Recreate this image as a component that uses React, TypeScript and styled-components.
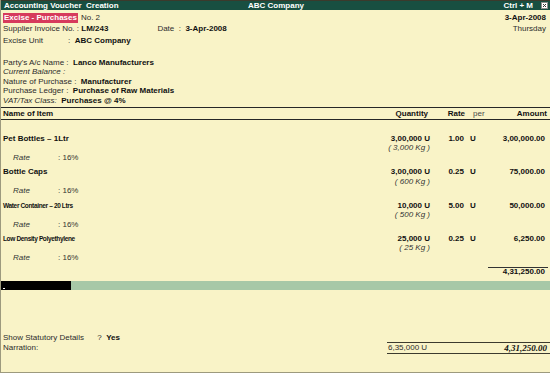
import React from 'react';
import styled, { createGlobalStyle } from 'styled-components';

interface ItemData {
  name: string;
  small?: boolean;
  qty: string;
  weight: string;
  rate: string;
  per: string;
  amount: string;
  tax: string;
}

const items: ItemData[] = [
  { name: 'Pet Bottles – 1Ltr', qty: '3,00,000 U', weight: '( 3,000 Kg )', rate: '1.00', per: 'U', amount: '3,00,000.00', tax: '16%' },
  { name: 'Bottle Caps', qty: '3,00,000 U', weight: '( 600 Kg )', rate: '0.25', per: 'U', amount: '75,000.00', tax: '16%' },
  { name: 'Water Container – 20 Ltrs', small: true, qty: '10,000 U', weight: '( 500 Kg )', rate: '5.00', per: 'U', amount: '50,000.00', tax: '16%' },
  { name: 'Low Density Polyethylene', small: true, qty: '25,000 U', weight: '( 25 Kg )', rate: '0.25', per: 'U', amount: '6,250.00', tax: '16%' },
];

const GlobalStyle = createGlobalStyle`
  html, body {
    margin: 0;
    padding: 0;
    background: #f9f3c7;
  }
  body {
    font-family: 'Liberation Sans', Arial, sans-serif;
    font-size: 8px;
    color: #1c1c1c;
  }
`;

const Screen = styled.div`
  width: 550px;
  height: 373px;
  box-sizing: border-box;
  background: #f9f3c7;
  border-left: 1px solid #9d9a7e;
  border-bottom: 1px solid #9d9a7e;
  display: flex;
  flex-direction: column;
  overflow: hidden;
`;

/* title bar */
const TitleBar = styled.div`
  height: 9px;
  border-top: 1px solid #3b3a2c;
  background: #184f41;
  color: #ffffff;
  font-weight: 700;
  line-height: 9px;
  display: grid;
  grid-template-columns: 1fr auto 1fr;
  align-items: center;
  padding: 0 2px 0 3px;
  white-space: pre;
`;

const TitleRight = styled.div`
  display: flex;
  justify-content: flex-end;
  align-items: center;
  gap: 8px;
`;

const CloseBox = () => (
  <svg width="7" height="7" viewBox="0 0 7 7">
    <rect x="0.5" y="0.5" width="6" height="6" fill="#ffffff" stroke="#8d8d8d" />
    <path d="M2 2 L5 5 M5 2 L2 5" stroke="#333" strokeWidth="1" />
  </svg>
);

/* voucher header */
const VoucherHead = styled.div`
  padding: 3px 4px 0 2px;
  display: flex;
  flex-direction: column;
`;

const HeadLine = styled.div<{ $gap?: number; $tall?: boolean }>`
  display: flex;
  align-items: center;
  justify-content: space-between;
  height: ${(p) => (p.$tall ? 10 : 9.5)}px;
  line-height: ${(p) => (p.$tall ? 10 : 9.5)}px;
  margin-top: ${(p) => p.$gap ?? 0}px;
  white-space: pre;
`;

const Group = styled.div`
  display: flex;
  align-items: center;
`;

const Badge = styled.span`
  background: #d63a5c;
  color: #ffffff;
  font-weight: 700;
  padding: 0 1px;
  height: 10px;
  line-height: 10px;
  margin-right: 3px;
`;

const Strong = styled.span`
  font-weight: 700;
  color: #111;
`;

const Muted = styled.span<{ $italic?: boolean }>`
  color: #2c2c2c;
  font-style: ${(p) => (p.$italic ? 'italic' : 'normal')};
`;

const FixedLabel = styled.span<{ $w: number }>`
  display: inline-block;
  width: ${(p) => p.$w}px;
  color: #2c2c2c;
`;

const DateField = styled.span`
  margin-left: 49px;
  color: #2c2c2c;
`;

/* table */
const ItemGrid = styled.div`
  display: grid;
  grid-template-columns: 1fr 80px 34px 24px 57px;
  padding: 0 5px 0 2px;
`;

const TableHead = styled(ItemGrid)`
  margin-top: 1.5px;
  height: 11px;
  line-height: 11px;
  border-top: 1px solid #262626;
  border-bottom: 1px solid #262626;
  font-weight: 700;
  color: #111;
`;

const HeadCell = styled.div<{ $align?: 'left' | 'right'; $shift?: number }>`
  text-align: ${(p) => p.$align ?? 'left'};
  margin-right: ${(p) => p.$shift ?? 0}px;
`;

const PerHead = styled.div`
  font-weight: 400;
  color: #4a4a4a;
  padding-left: 9px;
`;

const ItemList = styled.div`
  display: flex;
  flex-direction: column;
  gap: 4.9px;
  padding-top: 14.25px;
`;

const ItemBlock = styled(ItemGrid)`
  grid-auto-rows: 9.5px;
  line-height: 9.5px;
  white-space: pre;
`;

const ItemName = styled.div<{ $small?: boolean }>`
  font-weight: 700;
  color: #111;
  font-size: ${(p) => (p.$small ? 6.5 : 8)}px;
  letter-spacing: ${(p) => (p.$small ? -0.35 : 0)}px;
`;

const Num = styled.div`
  font-weight: 700;
  color: #111;
  text-align: right;
`;

const Per = styled.div`
  font-weight: 700;
  color: #111;
  padding-left: 6px;
`;

const Weight = styled.div`
  grid-column: 2;
  text-align: right;
  font-style: italic;
  color: #333;
`;

const TaxLine = styled.div`
  grid-column: 1 / -1;
  padding-left: 10px;
  color: #333;
`;

const TaxLabel = styled.span`
  display: inline-block;
  width: 45px;
  font-style: italic;
`;

const TotalRow = styled(ItemGrid)`
  margin-top: 5px;
`;

const TotalCell = styled.div`
  grid-column: 5;
  border-top: 1px solid #333;
  margin-right: -3px;
  padding-right: 3px;
  text-align: right;
  font-weight: 700;
  line-height: 8.5px;
  color: #111;
`;

/* status bar */
const Bar = styled.div`
  margin-top: 4.5px;
  height: 9px;
  background: #a7c8a7;
  display: flex;
`;

const Cursor = styled.div`
  width: 70px;
  background: #000000;
  display: flex;
  align-items: flex-end;
  padding: 0 0 1px 2px;
  box-sizing: border-box;
`;

const CursorDot = styled.span`
  width: 2px;
  height: 1px;
  background: #ffffff;
`;

/* footer */
const Footer = styled.div`
  flex: 1;
  display: flex;
  flex-direction: column;
  justify-content: flex-end;
  padding: 0 2px 18px 2px;
`;

const FooterLine = styled.div`
  line-height: 9.5px;
  white-space: pre;
  color: #2c2c2c;
`;

const NarrationRow = styled.div`
  display: flex;
  align-items: center;
  justify-content: space-between;
`;

const TotalsBox = styled.div`
  width: 159px;
  height: 10px;
  line-height: 10px;
  border-top: 1px solid #3c3a2e;
  border-bottom: 1px solid #3c3a2e;
  display: flex;
  justify-content: space-between;
  padding: 0 3px 0 1px;
  box-sizing: content-box;
  margin-right: -2px;
  color: #2c2c2c;
`;

const GrandTotal = styled.span`
  font-family: 'Liberation Serif', 'Times New Roman', serif;
  font-weight: 700;
  font-style: italic;
  font-size: 9px;
  color: #111;
`;

export default function App() {
  return (
    <>
      <GlobalStyle />
      <Screen>
        <TitleBar>
          <span>Accounting Voucher  Creation</span>
          <span>ABC Company</span>
          <TitleRight>
            <span>Ctrl + M</span>
            <CloseBox />
          </TitleRight>
        </TitleBar>

        <VoucherHead>
          <HeadLine $tall>
            <Group>
              <Badge>Excise - Purchases</Badge>
              <Muted>No. 2</Muted>
            </Group>
            <Strong>3-Apr-2008</Strong>
          </HeadLine>
          <HeadLine $gap={1}>
            <Group>
              <Muted>Supplier Invoice No. : </Muted>
              <Strong>LM/243</Strong>
              <DateField>Date  :  </DateField>
              <Strong>3-Apr-2008</Strong>
            </Group>
            <Muted>Thursday</Muted>
          </HeadLine>
          <HeadLine $gap={2}>
            <Group>
              <FixedLabel $w={65}>Excise Unit</FixedLabel>
              <Muted>:  </Muted>
              <Strong>ABC Company</Strong>
            </Group>
          </HeadLine>
          <HeadLine $gap={12.5}>
            <Group>
              <Muted>Party's A/c Name :  </Muted>
              <Strong>Lanco Manufacturers</Strong>
            </Group>
          </HeadLine>
          <HeadLine>
            <Muted $italic>Current Balance :</Muted>
          </HeadLine>
          <HeadLine>
            <Group>
              <Muted>Nature of Purchase :  </Muted>
              <Strong>Manufacturer</Strong>
            </Group>
          </HeadLine>
          <HeadLine>
            <Group>
              <Muted>Purchase Ledger :  </Muted>
              <Strong>Purchase of Raw Materials</Strong>
            </Group>
          </HeadLine>
          <HeadLine>
            <Group>
              <Muted $italic>VAT/Tax Class:  </Muted>
              <Strong>Purchases @ 4%</Strong>
            </Group>
          </HeadLine>
        </VoucherHead>

        <TableHead>
          <HeadCell>Name of Item</HeadCell>
          <HeadCell $align="right" $shift={2}>Quantity</HeadCell>
          <HeadCell $align="right" $shift={-1}>Rate</HeadCell>
          <PerHead>per</PerHead>
          <HeadCell $align="right" $shift={-2}>Amount</HeadCell>
        </TableHead>

        <ItemList>
          {items.map((it) => (
            <ItemBlock key={it.name}>
              <ItemName $small={it.small}>{it.name}</ItemName>
              <Num>{it.qty}</Num>
              <Num>{it.rate}</Num>
              <Per>{it.per}</Per>
              <Num>{it.amount}</Num>
              <Weight>{it.weight}</Weight>
              <TaxLine>
                <TaxLabel>Rate</TaxLabel>: {it.tax}
              </TaxLine>
            </ItemBlock>
          ))}
        </ItemList>

        <TotalRow>
          <TotalCell>4,31,250.00</TotalCell>
        </TotalRow>

        <Bar>
          <Cursor>
            <CursorDot />
          </Cursor>
        </Bar>

        <Footer>
          <FooterLine>
            Show Statutory Details      ?  <Strong>Yes</Strong>
          </FooterLine>
          <NarrationRow>
            <FooterLine>Narration:</FooterLine>
            <TotalsBox>
              <span>6,35,000 U</span>
              <GrandTotal>4,31,250.00</GrandTotal>
            </TotalsBox>
          </NarrationRow>
        </Footer>
      </Screen>
    </>
  );
}
